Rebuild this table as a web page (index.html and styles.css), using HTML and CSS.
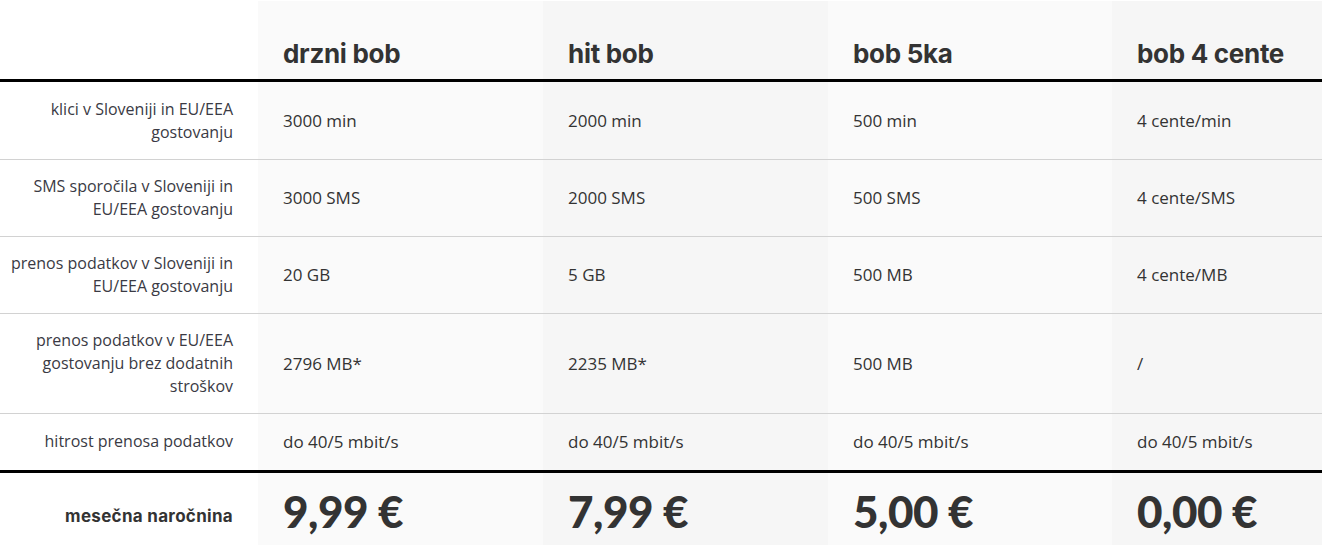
FILE: index.html
```html
<!DOCTYPE html>
<html lang="sl">
<head>
<meta charset="utf-8">
<title>Paketi bob</title>
<link rel="stylesheet" href="styles.css">
</head>
<body>
<div class="wrap">
<table class="plans">
  <colgroup>
    <col class="col-label">
    <col class="col-a">
    <col class="col-b">
    <col class="col-c">
    <col class="col-b">
  </colgroup>
  <thead>
    <tr>
      <th class="label"></th>
      <th class="plan c-a">drzni bob</th>
      <th class="plan c-b">hit bob</th>
      <th class="plan c-a">bob 5ka</th>
      <th class="plan c-b">bob 4 cente</th>
    </tr>
  </thead>
  <tbody>
    <tr class="first">
      <td class="label">klici v Sloveniji in EU/EEA gostovanju</td>
      <td class="c-a">3000 min</td>
      <td class="c-b">2000 min</td>
      <td class="c-a">500 min</td>
      <td class="c-b">4 cente/min</td>
    </tr>
    <tr>
      <td class="label">SMS sporočila v Sloveniji in EU/EEA gostovanju</td>
      <td class="c-a">3000 SMS</td>
      <td class="c-b">2000 SMS</td>
      <td class="c-a">500 SMS</td>
      <td class="c-b">4 cente/SMS</td>
    </tr>
    <tr>
      <td class="label">prenos podatkov v Sloveniji in EU/EEA gostovanju</td>
      <td class="c-a">20 GB</td>
      <td class="c-b">5 GB</td>
      <td class="c-a">500 MB</td>
      <td class="c-b">4 cente/MB</td>
    </tr>
    <tr>
      <td class="label">prenos podatkov v EU/EEA gostovanju brez dodatnih stroškov</td>
      <td class="c-a">2796 MB*</td>
      <td class="c-b">2235 MB*</td>
      <td class="c-a">500 MB</td>
      <td class="c-b">/</td>
    </tr>
    <tr class="last">
      <td class="label">hitrost prenosa podatkov</td>
      <td class="c-a">do 40/5 mbit/s</td>
      <td class="c-b">do 40/5 mbit/s</td>
      <td class="c-a">do 40/5 mbit/s</td>
      <td class="c-b">do 40/5 mbit/s</td>
    </tr>
  </tbody>
  <tfoot>
    <tr>
      <th class="label price-label">mesečna naročnina</th>
      <td class="price c-a">9,99 €</td>
      <td class="price c-b">7,99 €</td>
      <td class="price c-a">5,00 €</td>
      <td class="price c-b">0,00 €</td>
    </tr>
  </tfoot>
</table>
</div>
</body>
</html>
```
FILE: styles.css
```css
html, body {
  margin: 0;
  padding: 0;
  background: #ffffff;
  overflow: hidden;
}

.wrap {
  padding-top: 1px;
  width: 1322px;
  overflow: hidden;
}

.plans {
  border-collapse: collapse;
  table-layout: fixed;
  width: 1397px;
  font-family: "Open Sans", "Liberation Sans", sans-serif;
  font-size: 17px;
  line-height: 23px;
  color: #333333;
}

.col-label { width: 258px; }
.col-a, .col-b { width: 285px; }
.col-c { width: 284px; }

.c-a { background: #fafafa; }
.c-b { background: #f6f6f6; }

.plans th,
.plans td {
  text-align: left;
  vertical-align: middle;
  padding: 15px 25px;
  font-weight: 400;
}

.plans .label {
  text-align: right;
  padding: 15px 25px 15px 0;
  font-size: 16px;
  color: #3a3a44;
  background: #ffffff;
}

.plans thead tr > * {
  height: 79px;
  box-sizing: border-box;
  padding-top: 0;
  padding-bottom: 10px;
  vertical-align: bottom;
  border-bottom: 3px solid #000000;
}

.plans thead .plan {
  font-family: "Inter", "Lato", sans-serif;
  font-weight: 700;
  font-size: 26px;
  line-height: 30px;
  color: #333333;
  letter-spacing: -0.3px;
}

.plans tbody tr + tr td {
  border-top: 1px solid #d2d2d2;
}

.plans tbody tr.first > * {
  padding-top: 16px;
}

.plans tbody tr.last > * {
  padding-top: 16px;
  padding-bottom: 17px;
}

.plans tfoot tr > * {
  border-top: 3px solid #000000;
  height: 50px;
  padding-top: 13px;
  padding-bottom: 15px;
}

.plans tfoot .price-label {
  font-family: "Inter", "Lato", sans-serif;
  font-weight: 700;
  font-size: 17px;
  color: #333333;
  letter-spacing: 0.3px;
  padding-top: 19px;
  padding-bottom: 9px;
}

.plans tfoot .price {
  font-family: "Lato", "Inter", sans-serif;
  font-weight: 900;
  font-size: 44px;
  line-height: 50px;
  color: #333333;
  letter-spacing: -0.5px;
}
```
